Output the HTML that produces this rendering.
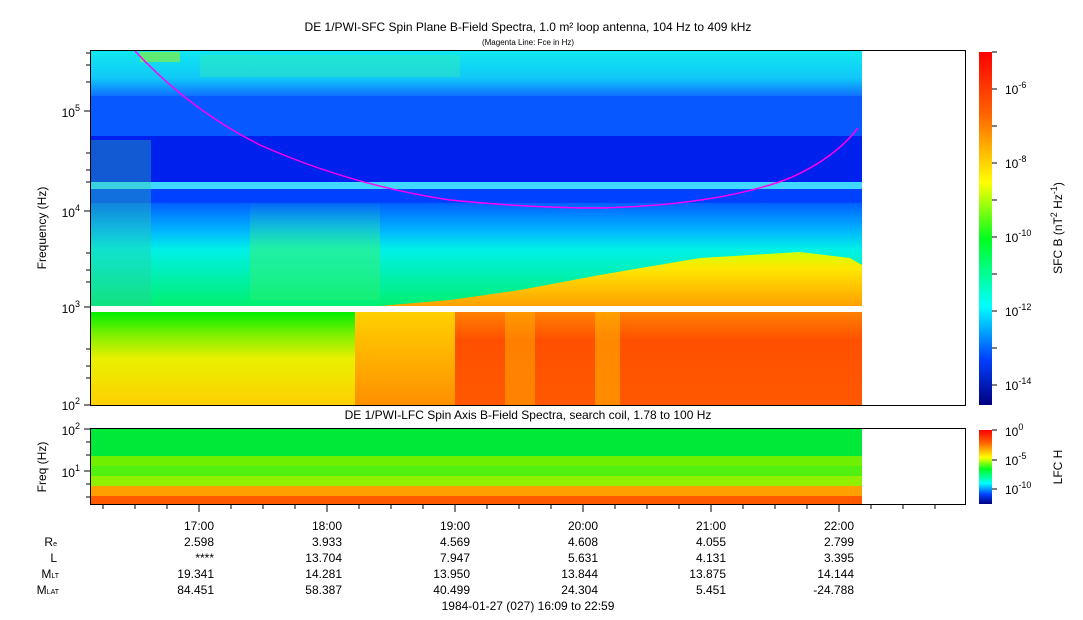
<!DOCTYPE html>
<html><head><meta charset="utf-8"><style>
body{margin:0;background:#fff;width:1083px;height:620px;overflow:hidden}
svg{display:block;font-family:"Liberation Sans",sans-serif}
</style></head><body>
<svg width="1083" height="620" viewBox="0 0 1083 620">
<defs>
<linearGradient id="jet" x1="0" y1="0" x2="0" y2="1">
<stop offset="0" stop-color="#ff0000"/><stop offset="0.17" stop-color="#ff6000"/>
<stop offset="0.37" stop-color="#ffff00"/><stop offset="0.53" stop-color="#00ff20"/>
<stop offset="0.72" stop-color="#00ffff"/><stop offset="0.87" stop-color="#0040ff"/>
<stop offset="1" stop-color="#000080"/></linearGradient>
<linearGradient id="mid" x1="0" y1="0" x2="0" y2="1">
<stop offset="0" stop-color="#0060ff"/><stop offset="0.25" stop-color="#00b0ff"/>
<stop offset="0.45" stop-color="#00f0e8"/><stop offset="1" stop-color="#00f070"/></linearGradient>
<linearGradient id="top" x1="0" y1="0" x2="0" y2="1">
<stop offset="0" stop-color="#10e8f0"/><stop offset="0.6" stop-color="#10c8f8"/><stop offset="1" stop-color="#1070ff"/></linearGradient>
<linearGradient id="band" x1="0" y1="0" x2="0" y2="1">
<stop offset="0" stop-color="#d0ff00"/><stop offset="0.3" stop-color="#ffe800"/><stop offset="1" stop-color="#ffa000"/></linearGradient>
<linearGradient id="lowL" x1="0" y1="0" x2="0" y2="1">
<stop offset="0" stop-color="#00f000"/><stop offset="0.25" stop-color="#80f000"/><stop offset="0.5" stop-color="#e8f000"/><stop offset="1" stop-color="#ffd000"/></linearGradient>
<linearGradient id="lowM" x1="0" y1="0" x2="0" y2="1">
<stop offset="0" stop-color="#ffd000"/><stop offset="1" stop-color="#ff9000"/></linearGradient>
<linearGradient id="lowR" x1="0" y1="0" x2="0" y2="1">
<stop offset="0" stop-color="#ff8000"/><stop offset="0.3" stop-color="#ff5000"/><stop offset="1" stop-color="#ff5800"/></linearGradient>
<linearGradient id="blob" x1="0" y1="0" x2="0" y2="1">
<stop offset="0" stop-color="#40f080" stop-opacity="0"/><stop offset="0.5" stop-color="#40f060" stop-opacity="0.5"/><stop offset="1" stop-color="#40f060" stop-opacity="0.3"/></linearGradient>
</defs>
<text x="528" y="31" font-size="12" text-anchor="middle">DE 1/PWI-SFC  Spin Plane B-Field Spectra, 1.0 m² loop antenna, 104 Hz to 409 kHz</text>
<text x="528" y="45" font-size="8" text-anchor="middle">(Magenta Line: Fce in Hz)</text>

<rect x="91" y="51" width="771" height="45" fill="url(#top)"/>
<rect x="200" y="55" width="260" height="22" fill="#40f0a0" opacity="0.35"/>
<rect x="140" y="52" width="40" height="10" fill="#80f040" opacity="0.7"/>
<rect x="91" y="96" width="771" height="40" fill="#0858ff"/>
<rect x="91" y="136" width="771" height="46" fill="#0020ee"/>
<rect x="91" y="182" width="771" height="7" fill="#40d8ff"/>
<rect x="91" y="189" width="771" height="14" fill="#0040ff"/>
<rect x="91" y="203" width="771" height="103" fill="url(#mid)"/>
<rect x="91" y="140" width="60" height="166" fill="#30c8a0" opacity="0.35"/>
<rect x="250" y="200" width="130" height="100" fill="url(#blob)"/>
<polygon points="380,306 450,300 520,290 600,275 700,258 800,252 850,258 862,265 862,306" fill="url(#band)"/>
<rect x="91" y="306" width="771" height="6" fill="#fff"/>
<rect x="91" y="312" width="264" height="93" fill="url(#lowL)"/>
<rect x="355" y="312" width="100" height="93" fill="url(#lowM)"/>
<rect x="455" y="312" width="407" height="93" fill="url(#lowR)"/>
<rect x="505" y="312" width="30" height="93" fill="#ffb000" opacity="0.5"/>
<rect x="595" y="312" width="25" height="93" fill="#ffc000" opacity="0.5"/>
<path d="M135,51 Q190,110 260,145 Q350,185 450,200 Q530,208 600,208 Q720,205 790,178 Q835,158 858,128" fill="none" stroke="#ff00ff" stroke-width="1.5"/>
<rect x="90.5" y="50.5" width="875" height="355" fill="none" stroke="#000"/>
<g font-size="12" text-anchor="end">
<text x="80" y="117">10<tspan font-size="9" dy="-6">5</tspan></text>
<text x="80" y="217">10<tspan font-size="9" dy="-6">4</tspan></text>
<text x="80" y="313">10<tspan font-size="9" dy="-6">3</tspan></text>
<text x="80" y="410">10<tspan font-size="9" dy="-6">2</tspan></text>
</g>
<g stroke="#000"><line x1="84" y1="111" x2="90" y2="111"/><line x1="84" y1="211" x2="90" y2="211"/><line x1="84" y1="307" x2="90" y2="307"/><line x1="84" y1="405" x2="90" y2="405"/>
<line x1="86" y1="53" x2="90" y2="53"/><line x1="86" y1="65" x2="90" y2="65"/><line x1="86" y1="82" x2="90" y2="82"/><line x1="86" y1="153" x2="90" y2="153"/><line x1="86" y1="170" x2="90" y2="170"/><line x1="86" y1="182" x2="90" y2="182"/><line x1="86" y1="253" x2="90" y2="253"/><line x1="86" y1="270" x2="90" y2="270"/><line x1="86" y1="282" x2="90" y2="282"/><line x1="86" y1="349" x2="90" y2="349"/><line x1="86" y1="366" x2="90" y2="366"/><line x1="86" y1="378" x2="90" y2="378"/></g>
<text transform="translate(46,228) rotate(-90)" font-size="12" text-anchor="middle">Frequency (Hz)</text>

<rect x="979" y="52" width="13" height="353" fill="url(#jet)"/>
<g stroke="#000"><line x1="992" y1="52" x2="997" y2="52"/><line x1="992" y1="89" x2="997" y2="89"/><line x1="992" y1="126" x2="997" y2="126"/><line x1="992" y1="163" x2="997" y2="163"/><line x1="992" y1="200" x2="997" y2="200"/><line x1="992" y1="237" x2="997" y2="237"/><line x1="992" y1="274" x2="997" y2="274"/><line x1="992" y1="311" x2="997" y2="311"/><line x1="992" y1="348" x2="997" y2="348"/><line x1="992" y1="385" x2="997" y2="385"/></g>
<g font-size="12"><text x="1005" y="94">10<tspan font-size="9" dy="-6">-6</tspan></text>
<text x="1005" y="168">10<tspan font-size="9" dy="-6">-8</tspan></text>
<text x="1005" y="242">10<tspan font-size="9" dy="-6">-10</tspan></text>
<text x="1005" y="316">10<tspan font-size="9" dy="-6">-12</tspan></text>
<text x="1005" y="390">10<tspan font-size="9" dy="-6">-14</tspan></text></g>
<text transform="translate(1062,228) rotate(-90)" font-size="12" text-anchor="middle">SFC B (nT<tspan font-size="9" dy="-5">2</tspan><tspan dy="5"> Hz</tspan><tspan font-size="9" dy="-5">-1</tspan><tspan dy="5">)</tspan></text>

<text x="528" y="419" font-size="12" text-anchor="middle">DE 1/PWI-LFC  Spin Axis B-Field Spectra, search coil, 1.78 to 100 Hz</text>
<rect x="91" y="429" width="771" height="27" fill="#00e838"/>
<rect x="91" y="456" width="771" height="10" fill="#70f000"/>
<rect x="91" y="466" width="771" height="10" fill="#50f010"/>
<rect x="91" y="476" width="771" height="10" fill="#90f000"/>
<rect x="91" y="486" width="771" height="10" fill="#ffa000"/>
<rect x="91" y="496" width="771" height="8" fill="#ff5a00"/>
<rect x="90.5" y="428.5" width="875" height="76" fill="none" stroke="#000"/>
<g stroke="#000"><line x1="84" y1="429" x2="90" y2="429"/><line x1="84" y1="471" x2="90" y2="471"/><line x1="86" y1="442" x2="90" y2="442"/><line x1="86" y1="455" x2="90" y2="455"/><line x1="86" y1="484" x2="90" y2="484"/><line x1="86" y1="497" x2="90" y2="497"/></g>
<g font-size="12" text-anchor="end">
<text x="80" y="435">10<tspan font-size="9" dy="-6">2</tspan></text>
<text x="80" y="477">10<tspan font-size="9" dy="-6">1</tspan></text></g>
<text transform="translate(46,467) rotate(-90)" font-size="12" text-anchor="middle">Freq (Hz)</text>
<rect x="979" y="430" width="13" height="74" fill="url(#jet)"/>
<g stroke="#000"><line x1="992" y1="430" x2="997" y2="430"/><line x1="992" y1="460" x2="997" y2="460"/><line x1="992" y1="489" x2="997" y2="489"/></g>
<g font-size="12"><text x="1005" y="436">10<tspan font-size="9" dy="-6">0</tspan></text>
<text x="1005" y="465">10<tspan font-size="9" dy="-6">-5</tspan></text>
<text x="1005" y="494">10<tspan font-size="9" dy="-6">-10</tspan></text></g>
<text transform="translate(1062,467) rotate(-90)" font-size="12" text-anchor="middle">LFC H</text>

<g stroke="#000">
<line x1="103" y1="505" x2="103" y2="509"/><line x1="135" y1="505" x2="135" y2="509"/><line x1="167" y1="505" x2="167" y2="509"/><line x1="199" y1="505" x2="199" y2="512"/>
<line x1="231" y1="505" x2="231" y2="509"/><line x1="263" y1="505" x2="263" y2="509"/><line x1="295" y1="505" x2="295" y2="509"/><line x1="327" y1="505" x2="327" y2="512"/>
<line x1="359" y1="505" x2="359" y2="509"/><line x1="391" y1="505" x2="391" y2="509"/><line x1="423" y1="505" x2="423" y2="509"/><line x1="455" y1="505" x2="455" y2="512"/>
<line x1="487" y1="505" x2="487" y2="509"/><line x1="519" y1="505" x2="519" y2="509"/><line x1="551" y1="505" x2="551" y2="509"/><line x1="583" y1="505" x2="583" y2="512"/>
<line x1="615" y1="505" x2="615" y2="509"/><line x1="647" y1="505" x2="647" y2="509"/><line x1="679" y1="505" x2="679" y2="509"/><line x1="711" y1="505" x2="711" y2="512"/>
<line x1="743" y1="505" x2="743" y2="509"/><line x1="775" y1="505" x2="775" y2="509"/><line x1="807" y1="505" x2="807" y2="509"/><line x1="839" y1="505" x2="839" y2="512"/>
<line x1="871" y1="505" x2="871" y2="509"/><line x1="903" y1="505" x2="903" y2="509"/><line x1="935" y1="505" x2="935" y2="509"/>
</g>
<g font-size="12" text-anchor="end">
<text x="214" y="530">17:00</text><text x="342" y="530">18:00</text><text x="470" y="530">19:00</text><text x="598" y="530">20:00</text><text x="726" y="530">21:00</text><text x="854" y="530">22:00</text>
<text x="214" y="546">2.598</text><text x="342" y="546">3.933</text><text x="470" y="546">4.569</text><text x="598" y="546">4.608</text><text x="726" y="546">4.055</text><text x="854" y="546">2.799</text>
<text x="214" y="562">****</text><text x="342" y="562">13.704</text><text x="470" y="562">7.947</text><text x="598" y="562">5.631</text><text x="726" y="562">4.131</text><text x="854" y="562">3.395</text>
<text x="214" y="578">19.341</text><text x="342" y="578">14.281</text><text x="470" y="578">13.950</text><text x="598" y="578">13.844</text><text x="726" y="578">13.875</text><text x="854" y="578">14.144</text>
<text x="214" y="594">84.451</text><text x="342" y="594">58.387</text><text x="470" y="594">40.499</text><text x="598" y="594">24.304</text><text x="726" y="594">5.451</text><text x="854" y="594">-24.788</text>
<text x="57" y="546">R<tspan font-size="7">e</tspan></text>
<text x="57" y="562">L</text>
<text x="59" y="578">M<tspan font-size="7">LT</tspan></text>
<text x="59" y="594">M<tspan font-size="7">LAT</tspan></text>
</g>
<text x="528" y="610" font-size="12" text-anchor="middle">1984-01-27 (027) 16:09 to 22:59</text>
</svg>
</body></html>
